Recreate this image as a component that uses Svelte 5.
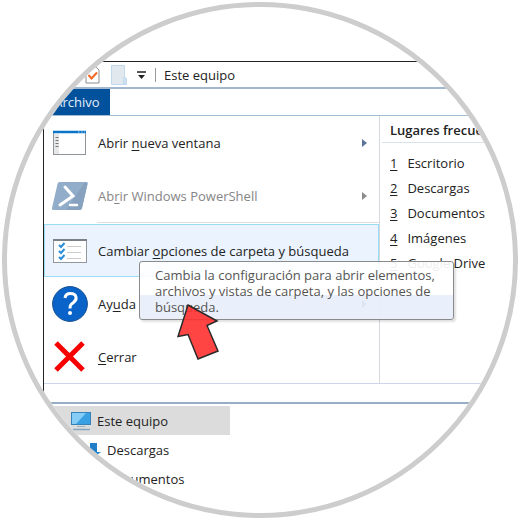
<script>
  const actions = [
    { id: 'window', pre: 'Abrir ', key: 'n', post: 'ueva ventana', arrow: true },
    { id: 'powershell', pre: 'Ab', key: 'r', post: 'ir Windows PowerShell', arrow: true, disabled: true },
    { id: 'options', pre: 'Cambiar ', key: 'o', post: 'pciones de carpeta y búsqueda', active: true },
    { id: 'help', pre: 'Ay', key: 'u', post: 'da', arrow: true },
    { id: 'close', pre: '', key: 'C', post: 'errar' }
  ];

  const places = ['Escritorio', 'Descargas', 'Documentos', 'Imágenes', 'Google Drive'];
</script>

<main class="page">
  <div class="lens">
    <section class="window">
      <header class="titlebar">
        <svg class="check" viewBox="0 0 15 18">
          <path d="M1 1h10l3 3v13H1z" fill="#fff" stroke="#8c8c8c" />
          <path d="M3.5 9l3 3.5 5.5-6" fill="none" stroke="#f26522" stroke-width="2" />
        </svg>
        <svg class="folder" viewBox="0 0 16 20">
          <path d="M.5 .5h13v12l2 1v6H.5z" fill="#e1e8ee" stroke="#bfd9ee" />
          <path d="M12.5 19v-5.5l1-1.500 2 1.500v5.500z" fill="#cfe1f0" stroke="#bfd9ee" />
        </svg>
        <svg class="more" viewBox="0 0 9 8">
          <path d="M0 1h9" stroke="#222" stroke-width="1.5" />
          <path d="M1 4h7L4.500 8z" fill="#222" />
        </svg>
        <span class="divider"></span>
        <h1>Este equipo</h1>
      </header>

      <nav class="tabs">
        <button class="tab">Archivo</button>
      </nav>

      <div class="menu">
        <ul class="actions">
          {#each actions as item}
            <li class:active={item.active} class:ruled={item.id === 'powershell'}>
              <button class="action" disabled={item.disabled}>
                <svg class="icon" viewBox="0 0 36 36">
                  {#if item.id === 'window'}
                    <rect x="1.5" y="6.5" width="32" height="23" fill="#fff" stroke="#8e9499" />
                    <path d="M1 7h33" stroke="#0a74c9" stroke-width="2.5" />
                    <path d="M26 7h1.5M29 7h1.5M32 7h1" stroke="#9cc9ec" />
                    <path d="M2 9h5v20H2z" fill="#e5e7e9" />
                    <path d="M3.5 12.5h3M3.5 15.5h3M3.5 18.5h3M3.5 21.5h3" stroke="#777" />
                  {:else if item.id === 'powershell'}
                    <path d="M7.500 4H34q2 0 1.500 2l-5.500 24q-.5 2-2.500 2H1.500q-2 0-1.500-2L5.500 6q.5-2 2-2z" fill="#91adc9" />
                    <path d="M33 4L14 32h13.500q2 0 2.500-2L35.500 6q.5-2-2.500-2z" fill="#86a2bf" />
                    <path d="M13 9l8 9-13 9" fill="none" stroke="#fff" stroke-width="3" stroke-linecap="round" />
                    <path d="M18 27h7" stroke="#fff" stroke-width="2.500" stroke-linecap="round" />
                  {:else if item.id === 'options'}
                    <rect x="1.5" y="6.5" width="33" height="23" fill="#fff" stroke="#92979c" />
                    <path d="M1 7h34" stroke="#7b8086" stroke-width="2" />
                    <path d="M7 12l2 2 3.500-4M7 18l2 2 3.500-4M7 24l2 2 3.500-4" fill="none" stroke="#2c8fd8" stroke-width="2" />
                    <path d="M15 13.500h14M15 19.500h14M15 25.500h14" stroke="#ccc" />
                  {:else if item.id === 'help'}
                    <circle cx="18" cy="18" r="17.400" fill="#0a63c9" stroke="#174f8d" />
                    <path d="M13 12q.5-4.500 5.500-4.500c6.500 0 7 6 3 9-2.500 1.900-3.500 2.500-3.500 6" fill="none" stroke="#fff" stroke-width="3" />
                    <circle cx="18" cy="27" r="2" fill="#fff" />
                  {:else}
                    <path d="M4 4l27 27M31 4L4 31" stroke="#f90000" stroke-width="5" />
                  {/if}
                </svg>
                <span class="label">{item.pre}<u>{item.key}</u>{item.post}</span>
                {#if item.arrow}
                  <svg class="arrow" viewBox="0 0 5 8"><path d="M0 0l5 4-5 4z" /></svg>
                {/if}
              </button>
              {#if item.active}
                <div class="tooltip" role="tooltip">
                  Cambia la configuración para abrir elementos,<br />
                  archivos y vistas de carpeta, y las opciones de<br />
                  búsqueda.
                </div>
                <svg class="pointer" viewBox="0 0 44 58">
                  <path d="M12 2L41 18 31 22.500 42 48 22 56 12 31.500 2 33.500z" />
                </svg>
              {/if}
            </li>
          {/each}
        </ul>

        <aside class="places">
          <h2>Lugares frecuentes</h2>
          <ol>
            {#each places as place, i}
              <li><a href="#place-{i + 1}"><u>{i + 1}</u><span>{place}</span></a></li>
            {/each}
          </ol>
        </aside>
      </div>

      <div class="strip"></div>

      <nav class="tree">
        <a class="node current" href="#equipo">
          <svg class="pc" viewBox="0 0 20 20">
            <rect x=".5" y="1.500" width="19" height="12" fill="#39a0e4" stroke="#3583b8" />
            <path d="M1 2h14L5 13H1z" fill="#85cdf5" />
            <path d="M6 15.500h8" stroke="#9eb4c4" />
            <path d="M2 18.500h17" stroke="#87a5bb" stroke-width="1.5" />
          </svg>
          Este equipo
        </a>
        <a class="node child" href="#descargas">
          <svg class="down" viewBox="0 0 14 14">
            <path d="M3 0h7v9h4l-7 5-7-5h3z" fill="#1e7fc8" />
          </svg>
          Descargas
        </a>
        <a class="node child" href="#documentos">
          <svg class="down" viewBox="0 0 14 14">
            <path d="M2 .5h7l3 3v10H2z" fill="#fff" stroke="#8aa" />
          </svg>
          Documentos
        </a>
      </nav>
    </section>
  </div>
</main>

<style>
  :global(body) {
    background: #fff;
  }
  .page {
    padding: 2px;
    font-family: "Open Sans", "Noto Sans", sans-serif;
    font-size: 13px;
    font-weight: 500;
    color: #222;
  }
  .lens {
    box-sizing: border-box;
    aspect-ratio: 1;
    padding: 54px 0 0 36px;
    border: 5px solid #cdcdcd;
    border-radius: 50%;
    overflow: hidden;
  }
  .window {
    border-top: 1px solid #222;
    border-left: 1px solid #222;
    white-space: nowrap;
  }
  h1, h2, ul, ol {
    margin: 0;
    padding: 0;
    font-size: 13px;
    list-style: none;
  }
  button {
    border: 0;
    background: none;
    font: inherit;
    color: inherit;
  }
  a {
    color: inherit;
    text-decoration: none;
  }
  u {
    text-underline-offset: 2px;
  }

  .titlebar {
    display: flex;
    align-items: center;
    height: 25px;
    padding-left: 41px;
    border-bottom: 2px solid #a3b8d0;
  }
  h1 {
    font-weight: 500;
  }
  .check {
    width: 15px;
    height: 18px;
    margin-right: 11px;
  }
  .folder {
    width: 16px;
    height: 20px;
    margin-right: 10px;
  }
  .more {
    width: 9px;
    height: 8px;
    margin-right: 9px;
  }
  .divider {
    height: 14px;
    margin-right: 8px;
    border-left: 1px solid #999;
  }

  .tabs {
    display: flex;
    height: 26px;
    border-bottom: 1px solid #a3bcd6;
  }
  .tab {
    width: 66px;
    padding: 0;
    background: #02519c;
    color: #e4eefa;
  }

  .menu {
    display: grid;
    grid-template-columns: 335px 1fr;
    border-bottom: 1px solid #cbd6ea;
  }
  .actions li {
    position: relative;
    height: 53px;
  }
  .actions .ruled::after {
    content: '';
    display: block;
    margin-left: 53px;
    border-top: 1px solid #dcdfe2;
  }
  .actions .ruled {
    height: 55px;
  }
  .action {
    box-sizing: border-box;
    display: flex;
    align-items: center;
    width: 100%;
    height: 53px;
    padding: 0 11px 0 7px;
    border: 1px solid transparent;
    text-align: left;
  }
  .active .action {
    border-color: #99dcf5;
    background: #ebf4fe;
  }
  .action:disabled {
    color: #858585;
  }
  .icon {
    width: 36px;
    height: 36px;
    margin-right: 10px;
  }
  .label {
    flex: 1;
  }
  .arrow {
    width: 5px;
    height: 8px;
    fill: #5b7396;
  }
  .action:disabled .arrow {
    fill: #8c8c8c;
  }

  .tooltip {
    position: absolute;
    z-index: 1;
    top: 37px;
    left: 95px;
    padding: 5px 18px 4px 15px;
    border: 1px solid #8a8a8a;
    border-radius: 3px;
    background: linear-gradient(rgba(255, 255, 255, 0.92) 58%, rgba(232, 238, 250, 0.92) 58%);
    box-shadow: 2px 2px 2px rgba(0, 0, 0, 0.12);
    line-height: 16px;
    color: #555;
  }
  .pointer {
    position: absolute;
    z-index: 2;
    top: 79px;
    left: 132px;
    width: 44px;
    height: 58px;
    fill: rgba(255, 48, 48, 0.9);
    stroke: #2b2b2b;
    stroke-width: 1.5;
  }

  .places {
    padding-left: 2px;
    border-left: 1px solid #d5d9de;
  }
  h2 {
    height: 26px;
    padding-left: 8px;
    border-bottom: 1px solid #d9e2ea;
    font-weight: 600;
    line-height: 29px;
  }
  ol {
    padding: 8px 0 0 8px;
  }
  .places a {
    display: flex;
    gap: 10px;
    line-height: 25px;
  }

  .strip {
    height: 18px;
    border-bottom: 2px solid #97aec4;
  }

  .tree {
    display: grid;
    padding-top: 2px;
  }
  .node {
    display: flex;
    align-items: center;
    height: 29px;
    padding-left: 27px;
    gap: 6px;
  }
  .current {
    width: 159px;
    background: #dcdcdc;
  }
  .child {
    padding-left: 43px;
  }
  .pc {
    width: 20px;
    height: 20px;
  }
  .down {
    width: 14px;
    height: 14px;
  }
</style>
